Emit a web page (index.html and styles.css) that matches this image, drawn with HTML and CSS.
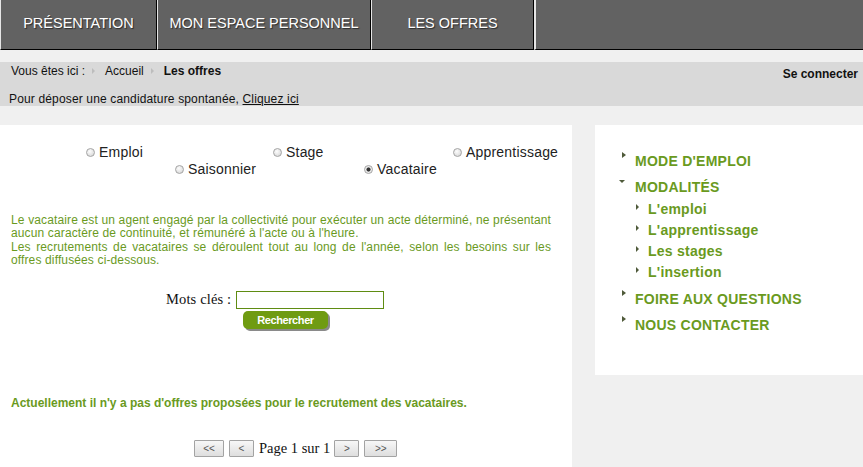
FILE: index.html
```html
<!DOCTYPE html>
<html lang="fr">
<head>
<meta charset="utf-8">
<title>Les offres</title>
<link rel="stylesheet" href="styles.css">
</head>
<body>
<nav class="nav">
  <a class="nav-item w1">PRÉSENTATION</a>
  <a class="nav-item w2">MON ESPACE PERSONNEL</a>
  <a class="nav-item w3">LES OFFRES</a>
  <span class="nav-fill"></span>
</nav>

<div class="crumbs">
  <div class="crumb-row">
    <div class="trail">Vous êtes ici :<span class="sep"></span>Accueil<span class="sep"></span><b>Les offres</b></div>
    <a class="login">Se connecter</a>
  </div>
  <div class="spont">Pour déposer une candidature spontanée, <a class="link">Cliquez ici</a></div>
</div>

<div class="main">
  <section class="content">
    <div class="types">
      <label class="type t1"><input type="radio" name="type" class="radio">Emploi</label>
      <label class="type t2 low"><input type="radio" name="type" class="radio">Saisonnier</label>
      <label class="type t3"><input type="radio" name="type" class="radio">Stage</label>
      <label class="type t4 low"><input type="radio" name="type" class="radio" checked>Vacataire</label>
      <label class="type t5"><input type="radio" name="type" class="radio">Apprentissage</label>
    </div>

    <p class="intro">Le vacataire est un agent engagé par la collectivité pour exécuter un acte déterminé, ne présentant aucun caractère de continuité, et rémunéré à l'acte ou à l'heure.</p>
    <p class="intro">Les recrutements de vacataires se déroulent tout au long de l'année, selon les besoins sur les offres diffusées ci-dessous.</p>

    <div class="search">
      <span class="search-label">Mots clés :</span>
      <input type="text" class="search-input">
    </div>
    <button class="search-btn">Rechercher</button>

    <p class="empty">Actuellement il n'y a pas d'offres proposées pour le recrutement des vacataires.</p>

    <div class="pager">
      <button class="pg pg-first">&lt;&lt;</button>
      <button class="pg pg-prev">&lt;</button>
      <span class="pg-text">Page 1 sur 1</span>
      <button class="pg pg-next">&gt;</button>
      <button class="pg pg-last">&gt;&gt;</button>
    </div>
  </section>

  <aside class="side">
    <ul class="menu">
      <li class="menu-item"><div class="row"><span class="arrow"></span>MODE D'EMPLOI</div></li>
      <li class="menu-item">
        <div class="row"><span class="arrow down"></span>MODALITÉS</div>
        <ul class="sub">
          <li class="row sub-row"><span class="arrow small"></span>L'emploi</li>
          <li class="row sub-row"><span class="arrow small"></span>L'apprentissage</li>
          <li class="row sub-row"><span class="arrow small"></span>Les stages</li>
          <li class="row sub-row"><span class="arrow small"></span>L'insertion</li>
        </ul>
      </li>
      <li class="menu-item"><div class="row"><span class="arrow"></span>FOIRE AUX QUESTIONS</div></li>
      <li class="menu-item"><div class="row"><span class="arrow"></span>NOUS CONTACTER</div></li>
    </ul>
  </aside>
</div>
</body>
</html>
```

FILE: styles.css
```css
* { box-sizing: border-box; margin: 0; padding: 0; }

body {
  background: #f0f0f0;
  font-family: "Liberation Sans", Arial, sans-serif;
  font-size: 12px;
  color: #222;
  width: 863px;
  height: 467px;
  overflow: hidden;
}

/* top navigation */
.nav {
  display: flex;
  height: 50px;
  background: #626262;
}
.nav-item {
  height: 50px;
  border-left: 1px solid #e6e6e6;
  border-right: 1px solid #000;
  border-bottom: 1px solid #000;
  color: #fff;
  font-size: 14.5px;
  line-height: 47px;
  text-align: center;
  text-shadow: 1px 1px 1px #2b2b2b;
}
.w1 { width: 157px; }
.w2 { width: 214px; }
.w3 { width: 163px; }
.nav-fill {
  flex: 1;
  border-left: 2px solid #e6e6e6;
  border-bottom: 1px solid #000;
}

/* breadcrumb bar */
.crumbs {
  margin-top: 12px;
  height: 44px;
  background: #d9d9d9;
  padding: 2px 5px 0 9px;
}
.crumb-row {
  display: flex;
  justify-content: space-between;
  line-height: 14px;
}
.trail { padding-left: 2px; color: #111; }
.trail b { color: #111; }
.sep {
  display: inline-block;
  width: 0;
  height: 0;
  border-left: 3px solid #bdbdbd;
  border-top: 3px solid transparent;
  border-bottom: 3px solid transparent;
  margin: 0 10px 0 7px;
  vertical-align: 1px;
}
.login {
  font-weight: bold;
  color: #111;
  margin-top: 3px;
}
.spont {
  margin-top: 11px;
  line-height: 14px;
  letter-spacing: 0.15px;
  color: #111;
}
.link { text-decoration: underline; color: #111; }

/* main area */
.main {
  display: flex;
  align-items: flex-start;
  gap: 23px;
  margin-top: 19px;
}
.content {
  width: 572px;
  height: 360px;
  background: #fff;
  padding: 19px 21px 0 11px;
}

.types {
  display: flex;
  align-items: flex-start;
  padding-left: 75px;
}
.type {
  display: flex;
  align-items: center;
  flex-shrink: 0;
  font-size: 14px;
  line-height: 16px;
  letter-spacing: 0.2px;
  color: #222;
}
.t1 { width: 89px; }
.t2 { width: 98px; }
.t3 { width: 91px; }
.t4 { width: 89px; }
.low { margin-top: 17px; }

.radio {
  appearance: none;
  -webkit-appearance: none;
  width: 9px;
  height: 9px;
  margin: 0 4px 0 0;
  border: 1px solid #a4a4a4;
  border-radius: 50%;
  background: radial-gradient(circle at 40% 35%, #fdfdfd 0, #dcdcdc 75%);
  flex-shrink: 0;
}
.radio:checked {
  background: radial-gradient(circle, #333 0, #333 1.7px, #ececec 2.4px);
}

.intro {
  color: #6a9a1e;
  text-align: justify;
  line-height: 13.4px;
  letter-spacing: 0.12px;
  word-spacing: 0.1px;
}
.types + .intro { margin-top: 37px; }

.search {
  display: flex;
  align-items: center;
  margin-top: 23px;
  padding-left: 155px;
}
.search-label {
  font-family: "Liberation Serif", "Times New Roman", serif;
  font-size: 14.5px;
  letter-spacing: 0.15px;
  color: #111;
}
.search-input {
  width: 148px;
  height: 18px;
  margin-left: 5px;
  border: 1px solid #5f8c12;
  background: #fff;
}
.search-btn {
  display: block;
  margin: 2px 0 0 232px;
  width: 85px;
  height: 18px;
  border: none;
  border-radius: 5px;
  background: #6f9b12;
  box-shadow: 2px 2px 0 #8a8a8a;
  color: #fff;
  font-family: "Liberation Sans", Arial, sans-serif;
  font-weight: bold;
  font-size: 11px;
  letter-spacing: -0.4px;
}

.empty {
  margin-top: 67px;
  line-height: 14px;
  color: #6a9a1e;
  font-weight: bold;
}

.pager {
  display: flex;
  align-items: center;
  gap: 5px;
  margin-top: 30px;
  padding-left: 183px;
}
.pg {
  height: 17px;
  border: 1px solid #a3a3a3;
  border-radius: 1px;
  background: linear-gradient(#f7f7f7, #dedede);
  color: #555;
  font-family: "Liberation Sans", Arial, sans-serif;
  font-size: 10px;
  line-height: 15px;
}
.pg-first { width: 30px; }
.pg-prev { width: 25px; }
.pg-next { width: 25px; margin-left: -1px; }
.pg-last { width: 33px; }
.pg-text {
  font-family: "Liberation Serif", "Times New Roman", serif;
  font-size: 14.5px;
  color: #111;
}

/* side menu */
.side {
  width: 268px;
  height: 250px;
  background: #fff;
  padding: 28px 0 0 27px;
}
.menu, .sub { list-style: none; }
.menu {
  display: flex;
  flex-direction: column;
  gap: 10px;
}
.row {
  display: flex;
  align-items: flex-start;
  height: 16px;
  line-height: 16px;
  font-size: 14px;
  font-weight: bold;
  letter-spacing: 0.25px;
  color: #6a9a1e;
}
.sub {
  display: flex;
  flex-direction: column;
  gap: 5px;
  margin-top: 6px;
  padding: 0 0 1px 14px;
}
.arrow {
  width: 0;
  height: 0;
  border-left: 4px solid #4f5a3a;
  border-top: 3px solid transparent;
  border-bottom: 3px solid transparent;
  margin: -1px 9px 0 0;
  flex-shrink: 0;
}
.arrow.down {
  border-left: 3px solid transparent;
  border-right: 3px solid transparent;
  border-top: 3px solid #4f5a3a;
  border-bottom: none;
  margin: 1px 10px 0 -3px;
}
.arrow.small {
  border-left-width: 3px;
  margin: 3px 9px 0 0;
}
```
